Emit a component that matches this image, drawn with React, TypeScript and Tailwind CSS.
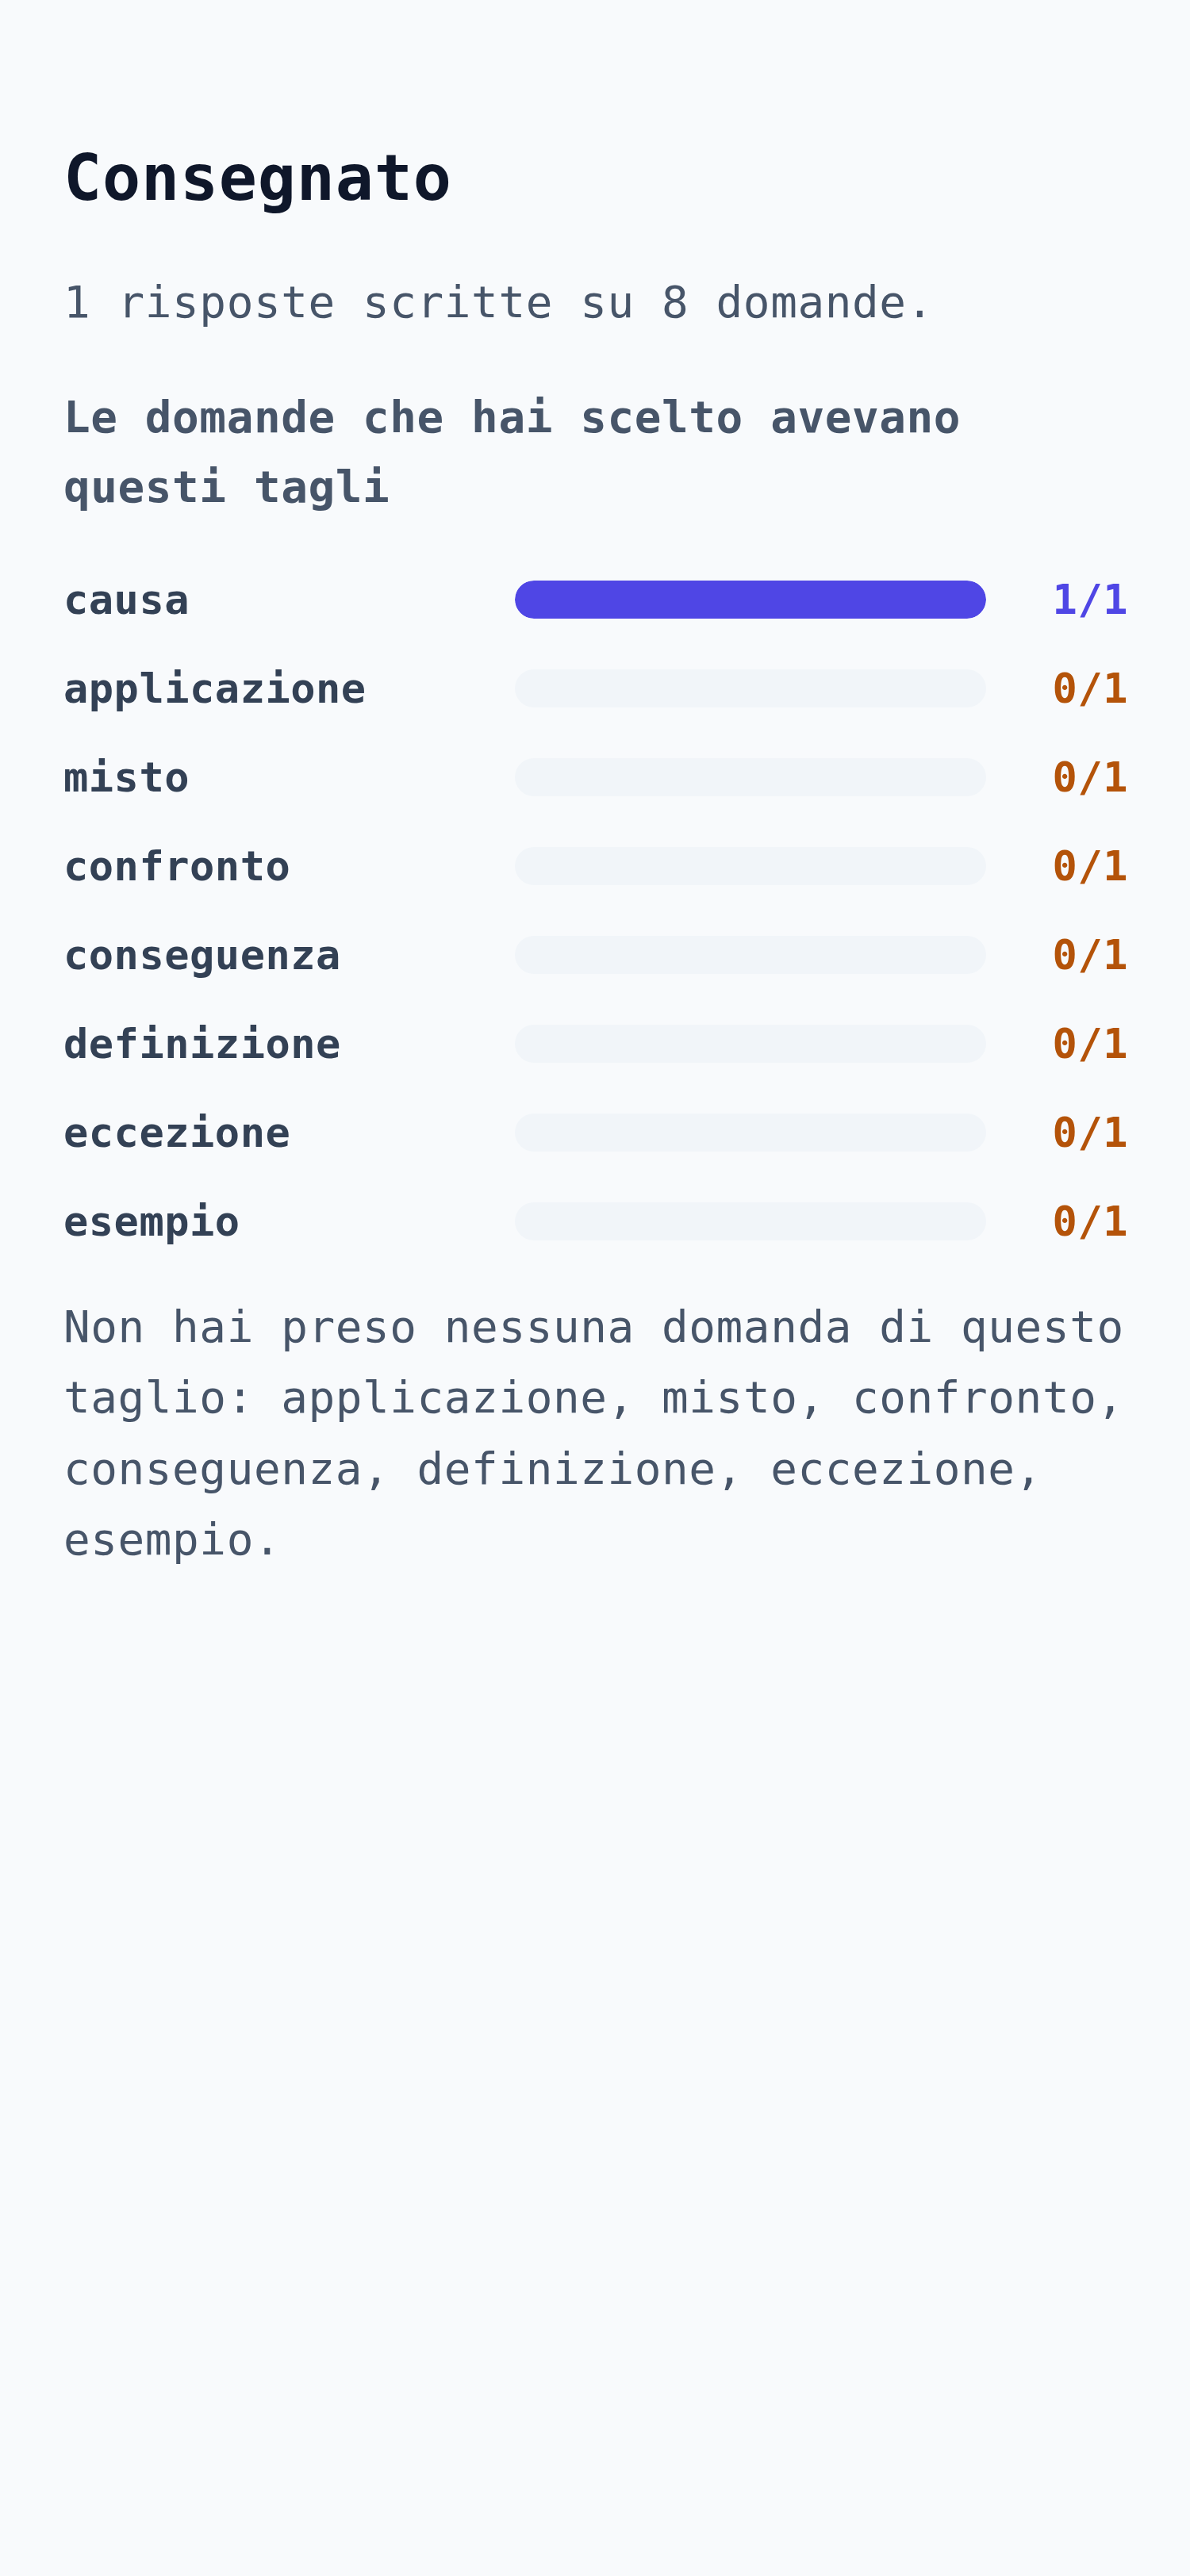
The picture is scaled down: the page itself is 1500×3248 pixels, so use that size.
import React from "react";

interface Cut {
  name: string;
  done: number;
  total: number;
}

const CUTS: Cut[] = [
  { name: "causa", done: 1, total: 1 },
  { name: "applicazione", done: 0, total: 1 },
  { name: "misto", done: 0, total: 1 },
  { name: "confronto", done: 0, total: 1 },
  { name: "conseguenza", done: 0, total: 1 },
  { name: "definizione", done: 0, total: 1 },
  { name: "eccezione", done: 0, total: 1 },
  { name: "esempio", done: 0, total: 1 },
];

const mono = "font-['DejaVu_Sans_Mono','Liberation_Mono',monospace]";

export default function App() {
  const missed = CUTS.filter((c) => c.done === 0).map((c) => c.name);

  return (
    <div className={`min-h-[3248px] bg-[#f8fafc] ${mono}`}>
      <div className="pl-[80px] pr-[78px] pt-[177px]">
        {/* Header */}
        <h1 className="text-[80px] leading-[96px] font-bold tracking-[0.8px] text-[#0f172a]">
          Consegnato
        </h1>
        <p className="mt-[63px] text-[56px] leading-[89.6px] tracking-[0.56px] text-[#475569]">
          1 risposte scritte su 8 domande.
        </p>

        <h2 className="mt-[56px] text-[56px] leading-[88px] font-bold tracking-[0.56px] text-[#475569]">
          Le domande che hai scelto avevano questi tagli
        </h2>

        {/* Per-cut breakdown */}
        <div className="mt-[66px] flex flex-col gap-[48px]">
          {CUTS.map((cut) => {
            const pct = cut.total ? (cut.done / cut.total) * 100 : 0;
            const ok = cut.done > 0;
            return (
              <div key={cut.name} className="flex h-[64px] items-center">
                <span className="w-[569px] shrink-0 text-[52px] leading-[64px] font-bold tracking-[0.5px] text-[#334155]">
                  {cut.name}
                </span>
                <div className="h-[48px] w-[594px] shrink-0 overflow-hidden rounded-full bg-[#f1f5f9]">
                  <div
                    className="h-full rounded-full bg-[#4f46e5]"
                    style={{ width: `${pct}%` }}
                  />
                </div>
                <span
                  className={`flex-1 text-right text-[52px] leading-[64px] font-bold tracking-[0.5px] ${
                    ok ? "text-[#4f46e5]" : "text-[#b45309]"
                  }`}
                >
                  {cut.done}/{cut.total}
                </span>
              </div>
            );
          })}
        </div>

        <p className="mt-[56px] text-[56px] leading-[89.6px] tracking-[0.56px] text-[#475569]">
          Non hai preso nessuna domanda di questo taglio: {missed.join(", ")}.
        </p>
      </div>
    </div>
  );
}
